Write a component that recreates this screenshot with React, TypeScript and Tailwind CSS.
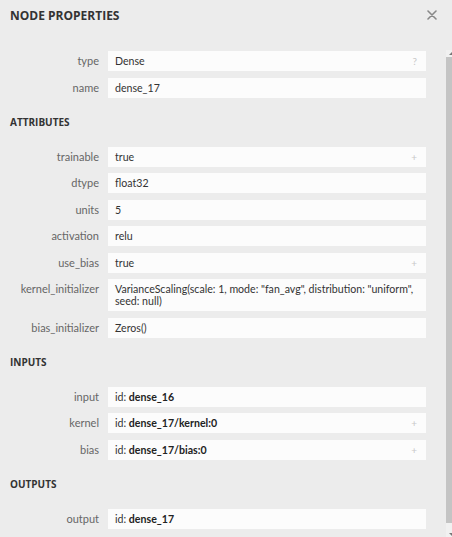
import React from 'react';

type Row = {
  label: string;
  value?: string;
  id?: string;
  hint?: '?' | '+';
};

const nodeRows: Row[] = [
  { label: 'type', value: 'Dense', hint: '?' },
  { label: 'name', value: 'dense_17' },
];

const attributes: Row[] = [
  { label: 'trainable', value: 'true', hint: '+' },
  { label: 'dtype', value: 'float32' },
  { label: 'units', value: '5' },
  { label: 'activation', value: 'relu' },
  { label: 'use_bias', value: 'true', hint: '+' },
  {
    label: 'kernel_initializer',
    value: 'VarianceScaling(scale: 1, mode: "fan_avg", distribution: "uniform", seed: null)',
  },
  { label: 'bias_initializer', value: 'Zeros()' },
];

const inputs: Row[] = [
  { label: 'input', id: 'dense_16' },
  { label: 'kernel', id: 'dense_17/kernel:0', hint: '+' },
  { label: 'bias', id: 'dense_17/bias:0', hint: '+' },
];

const outputs: Row[] = [{ label: 'output', id: 'dense_17' }];

function PropertyRow({ row }: { row: Row }) {
  return (
    <div className="flex items-start">
      <div className="w-[99px] shrink-0 text-right text-[11px] leading-[12px] pt-[4px] text-[#666]">
        {row.label}
      </div>
      <div className="ml-[9px] w-[318px] bg-[#fcfcfc] flex items-start justify-between pl-[7px] pr-[2px] py-[4px]">
        <div className="text-[10.6px] leading-[12px] text-[#333]">
          {row.id ? (
            <>
              id: <span className="font-bold text-[#222]">{row.id}</span>
            </>
          ) : (
            row.value
          )}
        </div>
        {row.hint && (
          <span className="text-[10px] leading-[12px] text-[#c8c8c8] shrink-0 pr-[7px]">{row.hint}</span>
        )}
      </div>
    </div>
  );
}

function Rows({ rows }: { rows: Row[] }) {
  return (
    <div className="flex flex-col gap-[6.5px]">
      {rows.map((r) => (
        <PropertyRow key={r.label} row={r} />
      ))}
    </div>
  );
}

function SectionHeader({ title }: { title: string }) {
  return (
    <div
      className="mt-[16px] mb-[17px] pl-[10px] h-[16px] leading-[16px] text-[10px] font-bold text-[#333]"
      style={{ fontFamily: '"Open Sans", sans-serif' }}
    >
      {title}
    </div>
  );
}

export default function App() {
  return (
    <div
      className="w-[452px] h-[537px] bg-[#ececec] overflow-hidden flex flex-col"
      style={{ fontFamily: 'Lato, "Open Sans", sans-serif' }}
    >
      {/* Title bar */}
      <div className="flex items-center justify-between pt-[8px] pl-[10px] pr-[15px] h-[24px] shrink-0">
        <span
          className="text-[12px] leading-[16px] font-bold text-[#333]"
          style={{ fontFamily: '"Open Sans", sans-serif' }}
        >
          NODE PROPERTIES
        </span>
        <svg width="10" height="10" viewBox="0 0 10 10" className="mt-[-2px]">
          <path d="M1 1 L9 9 M9 1 L1 9" stroke="#888" strokeWidth="1.6" strokeLinecap="round" />
        </svg>
      </div>

      <div className="flex flex-1 min-h-0">
        <div className="flex-1 pt-[27px]">
          <Rows rows={nodeRows} />
          <SectionHeader title="ATTRIBUTES" />
          <Rows rows={attributes} />
          <SectionHeader title="INPUTS" />
          <Rows rows={inputs} />
          <SectionHeader title="OUTPUTS" />
          <Rows rows={outputs} />
        </div>

        {/* Scrollbar (partially visible) */}
        <div className="w-[6px] mt-[26px] flex flex-col bg-[#f1f1f1]">
          <div className="h-[6px] flex items-center justify-end">
            <div className="w-0 h-0 border-l-[3px] border-r-[3px] border-b-[3px] border-l-transparent border-r-transparent border-b-[#777] mr-[-3px]" />
          </div>
          <div className="flex-1 bg-[#c4c4c4] mt-[1px] mb-[8px]" />
          <div className="h-[6px] flex items-center justify-end">
            <div className="w-0 h-0 border-l-[3px] border-r-[3px] border-t-[3px] border-l-transparent border-r-transparent border-t-[#777] mr-[-3px]" />
          </div>
        </div>
      </div>
    </div>
  );
}
